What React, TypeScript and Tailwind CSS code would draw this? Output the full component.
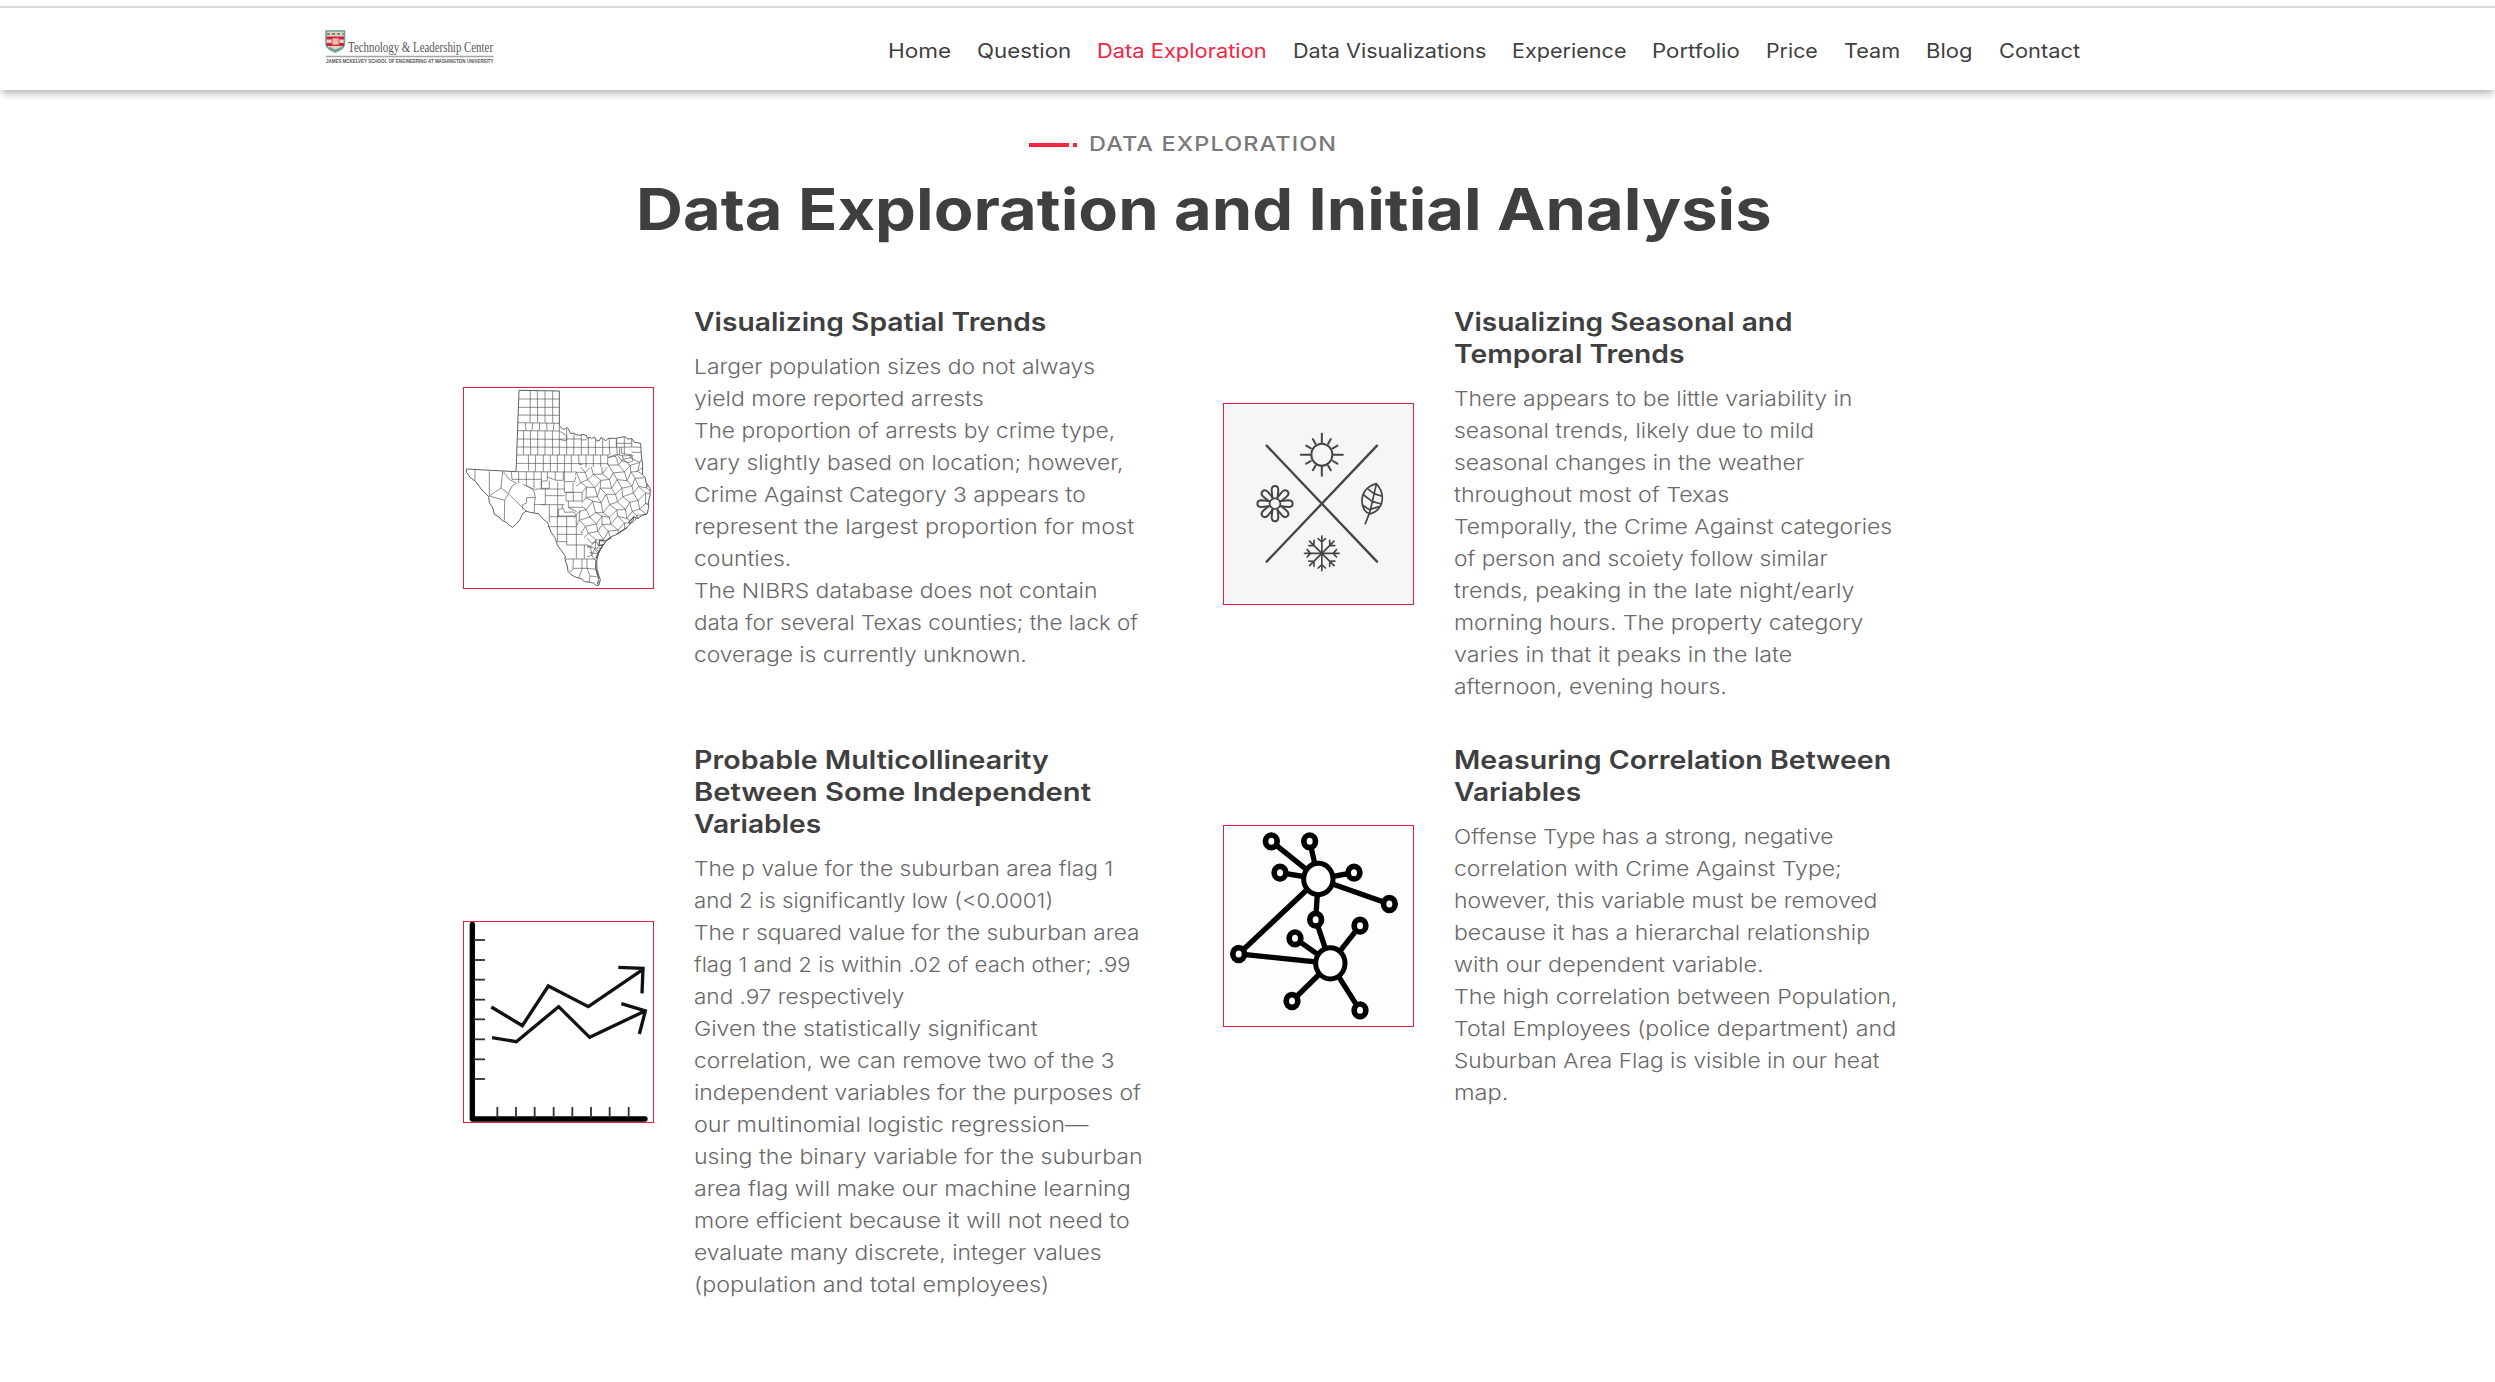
import { useLayoutEffect, useRef, useState } from "react";
import type { ReactNode } from "react";

type LineData = [text: string, width: number];

/** A single line of text whose glyphs are widened so that it spans `width`. */
function Fit({ text, width }: { text: string; width: number }) {
  const ref = useRef<HTMLSpanElement>(null);
  const [scale, setScale] = useState(1);
  useLayoutEffect(() => {
    if (ref.current) setScale(width / ref.current.offsetWidth);
  }, [text, width]);
  return (
    <span className="inline-block whitespace-nowrap" style={{ width }}>
      <span ref={ref} className="inline-block origin-left" style={{ transform: `scaleX(${scale})` }}>
        {text}
      </span>
    </span>
  );
}

function Logo() {
  return (
    <svg width="280" height="40" viewBox="0 0 280 40" aria-label="Technology & Leadership Center">
      <path d="M1 1H19.500V14Q19 19 10.200 22Q1.500 19 1 14Z" fill="#e9d3b8" stroke="#6fa192" strokeWidth="1.600" />
      <path d="M2 4H18.500" stroke="#6a9182" strokeWidth="2" strokeDasharray="3 2" />
      <path d="M1.500 8H19M1.500 14.500H19" stroke="#c4224c" strokeWidth="3" />
      <path d="M7 8H14V15H7Z" fill="#f0b9a5" stroke="#d4365a" strokeWidth=".8" />
      <path d="M4 17.500L10 20.500L17 17.500" stroke="#6fa192" strokeWidth="1.600" fill="none" />
      <text x="23" y="22.300" fontFamily="Liberation Serif, serif" fontSize="14.500" fill="#555" textLength="145" lengthAdjust="spacingAndGlyphs">
        Technology &amp; Leadership Center
      </text>
      <path d="M1 26.500H168.500" stroke="#a5a5a5" strokeWidth="1.300" />
      <text x="1" y="33" fontFamily="Liberation Sans, sans-serif" fontSize="5.400" fontWeight="700" fill="#555" textLength="167.500" lengthAdjust="spacingAndGlyphs">
        JAMES MCKELVEY SCHOOL OF ENGINEERING AT WASHINGTON UNIVERSITY
      </text>
    </svg>
  );
}

const noise = (i: number, j: number, k: number) => {
  const v = Math.sin(i * 127.1 + j * 311.7 + k * 74.7) * 43758.5453;
  return v - Math.floor(v) - 0.5;
};

/** Irregular brick-like cells standing for the small eastern counties. */
function easternCounties() {
  const size = 25;
  const angle = -0.5;
  const point = (i: number, j: number): [number, number] => {
    const x = i * size + (j % 2 ? size * 0.4 : 0) + noise(i, j, 1) * 11;
    const y = j * size + (i % 2 ? 6 : -5) + noise(i, j, 2) * 10;
    return [
      480 + x * Math.cos(angle) - y * Math.sin(angle),
      390 + x * Math.sin(angle) + y * Math.cos(angle),
    ];
  };
  let d = "";
  for (let i = -10; i < 11; i++) {
    for (let j = -10; j < 11; j++) {
      const a = point(i, j);
      const b = point(i + 1, j);
      const c = point(i, j + 1);
      d += `M${b[0].toFixed(1)} ${b[1].toFixed(1)}L${a[0].toFixed(1)} ${a[1].toFixed(1)}L${c[0].toFixed(1)} ${c[1].toFixed(1)}`;
    }
  }
  return d;
}

const TEXAS =
  "M207 46L328 48V152L336 161L344 163L350 158L354 160L362 176L370 174L378 179L390 181L396 178L409 181L412 190L420 187L425 191L433 186L440 197L447 198L453 188L460 191L467 198L474 190L496 190L508 188L524 185L534 192L546 191L553 202L572 205L574 240L578 272L577 298L585 307L588 322L596 334L601 342L600 360L596 378L596 395L592 416L578 421L562 431L552 425L548 440L539 448L530 459L516 468L499 479L484 485L472 493L466 503L458 510L454 520L446 533L443 545L440 562L441 583L446 600L451 615L447 630L440 632L430 624L416 621L404 620L393 611L378 607L362 598L354 589L352 573L346 558L345 542L332 524L322 510L316 490L304 473L297 456L293 443L278 431L266 416L252 414L240 412L228 408L216 419L211 432L200 446L188 457L178 451L171 443L157 437L147 426L133 418L128 398L118 382L116 365L96 345L77 320L60 307L50 293L49 282L198 290L200 240Z";

function TexasMap() {
  return (
    <svg width="191" height="202" viewBox="39 36 573 606" fill="none" stroke="#555" strokeLinejoin="round">
      <defs>
        <clipPath id="east">
          <path d="M372 290L388 282L395 270L410 280L430 275L474 276L474 246L498 240L574 240L578 272L577 298L601 342L596 395L592 416L539 448L499 479L466 503L443 545L440 555H411V510L398 480L379 450L372 425L395 395L397 352L368 325L378 305Z" />
        </clipPath>
      </defs>
      <path d={TEXAS} strokeWidth="2.800" />
      <g strokeWidth="2">
        <path d="M206 72H328M205 97H328M204 120L328 121M203 143L328 145M202 167L328 168L350 182V196M202 192L328 193L350 198M201 216L394 217M200 240L478 240M200 265L474 266M198 290L372 291" />
        <path d="M241 47L240 143M262 47L263 143M285 48V143M308 48V143M226 143L228 167M248 143L246 167M269 143L268 167M290 143L291 167M312 143L310 167" />
        <path d="M221 167L220 240M241 167L242 240M263 167V240M285 167V240M307 167L308 240M328 152V240M350 160V240M372 176L371 240M394 180V240M328 192H394" />
        <path d="M235 240L236 288M257 240L256 290M280 240V290M301 240V290M322 240V290M344 240L343 290M364 240V290M386 240L387 268L398 268M408 240V278M430 240V276M452 240V276M473 240V270" />
        <path d="M394 217H480M394 195L410 194M415 187V240M437 190L436 240M458 191V240M478 190V217L480 240M499 190V217M478 217H500V190M523 186V240M500 217L545 216V191M545 216L573 217M500 205H545M545 232H573M500 217L502 240M474 247L500 238L522 243L545 240M509 217V240M515 217V235L545 240L549 258L535 263L515 257L502 240" />
        <path d="M160 290L178 313L199 325L187 332L175 355L153 339L118 363M153 339L158 289M118 289V362M75 284V317M118 363L164 376L163 437M164 376L175 356L228 408M184 290L186 313H275M206 290V325M229 290V333L258 345M252 290V340M274 290V342M292 290V318H274V340H298V318M292 306L318 316H340V290M316 290V314M343 290V320H373L378 305" />
        <path d="M218 328L236 335L252 348L256 368L230 368V384L218 389V404M256 368L253 388M258 342H343M286 342V389M286 362H343M286 389L253 388M253 388V414M275 389H323V425M323 320V389H343M343 320V352H369V325M348 352V378H396V352M370 352V378M348 352H396M355 378V397H397M298 389V443M298 425H378M325 425L326 402L340 401L344 412L372 411L380 423H323M337 389V402M355 397L380 410" />
        <path d="M295 455H378M322 425V500H352M350 425V510H412M322 478H398M379 425V551M403 510V551M347 552H440M370 552L369 583L359 590M396 552V583L387 607M411 552V580L440 583M369 580H411M411 580L420 603L440 605M420 603L417 621M412 515L430 518L444 535M418 533L442 536M411 490L425 505L440 500L445 513L458 510" />
        <path clipPath="url(#east)" d={easternCounties()} />
      </g>
      <path d="M552 425L536 442L542 447M530 458L500 478M484 488L466 498L449 496L447 512L460 509M462 507L446 530L438 550M438 555L437 580L446 612M447 615L442 628" strokeWidth="3.500" />
    </svg>
  );
}

const TURNS = [0, 45, 90, 135, 180, 225, 270, 315];
const RAYS = [0, 30, 60, 90, 120, 150, 180, 210, 240, 270, 300, 330];

function Seasons() {
  return (
    <svg width="191" height="202" viewBox="39 24 573 606" fill="none" stroke="#454545" strokeWidth="6" strokeLinecap="round" strokeLinejoin="round">
      <rect x="39" y="24" width="573" height="606" fill="#f5f6f8" stroke="none" />
      <path d="M170 152L501 500M501 152L170 500" strokeWidth="7" />
      <g transform="translate(335.500 179)">
        <ellipse rx="31.500" ry="33" />
        {RAYS.map((a) => (
          <path key={a} d={a % 90 === 0 ? "M0 -35V-63" : "M0 -38V-54"} transform={`rotate(${a})`} />
        ))}
      </g>
      <g transform="translate(195 326)">
        <circle r="16" strokeWidth="5" />
        {TURNS.map((a) => (
          <path key={a} d="M-8 -18L-10 -40C-10 -57 10 -57 10 -40L8 -18" transform={`rotate(${a})`} />
        ))}
      </g>
      <g transform="translate(335.500 475)" strokeWidth="5">
        {TURNS.map((a) => (
          <path key={a} d="M0 0V-52M-11 -44L0 -34L11 -44" transform={`rotate(${a})`} />
        ))}
      </g>
      <path d="M466 386L480 350L499 268M499 266C468 275 454 297 456 321C457 340 467 354 480 357C502 351 517 333 517 308C517 289 508 276 499 266M476 284L492 296M461 300L486 319M457 330L478 344M492 296L514 303M486 319L514 327M478 344L508 335" strokeWidth="5" />
    </svg>
  );
}

const Y_TICKS = [102, 162, 221, 281, 340, 400, 460, 519];
const X_TICKS = [142, 198, 254, 311, 367, 423, 479, 536];

function TrendChart() {
  return (
    <svg width="191" height="202" viewBox="39 45 573 606" fill="none" stroke="#000">
      <path d="M67 55V639H585" strokeWidth="16" strokeLinecap="round" strokeLinejoin="round" />
      <g stroke="#333" strokeWidth="5.500">
        {Y_TICKS.map((y) => (
          <path key={y} d={`M72 ${y}H105`} />
        ))}
        {X_TICKS.map((x) => (
          <path key={x} d={`M${x} 603V635`} />
        ))}
      </g>
      <g stroke="#111" strokeWidth="10">
        <path d="M124 303L217 359L295 240L415 302L579 190M505 184L579 187L576 262" />
        <path d="M126 395L199 407L326 302L419 394L585 315M514 293L586 315L568 384" />
      </g>
    </svg>
  );
}

const SMALL_NODES = [
  [184, 76], [299, 76], [210, 170], [432, 170], [538, 264], [317, 311],
  [450, 329], [255, 367], [86, 414], [246, 555], [450, 583],
];

function Network() {
  return (
    <svg width="191" height="202" viewBox="39 27 573 606" fill="none" stroke="#000">
      <rect x="39" y="27" width="573" height="606" fill="#fdfdfd" stroke="none" />
      <path
        d="M184 76L325 189M299 76L325 189M210 170L325 189L432 170M325 189L538 264M325 189L317 311L361 442M325 189L86 414L361 442L450 329M255 367L361 442L246 555M361 442L450 583"
        strokeWidth="16"
      />
      <g fill="#fff">
        <ellipse cx="325" cy="189" rx="44" ry="47" strokeWidth="15" />
        <ellipse cx="361" cy="442" rx="44" ry="47" strokeWidth="15" />
        {SMALL_NODES.map(([x, y]) => (
          <ellipse key={`${x}-${y}`} cx={x} cy={y} rx="17.500" ry="19" strokeWidth="17" />
        ))}
      </g>
    </svg>
  );
}

const NAV: LineData[] = [
  ["Home", 63], ["Question", 94], ["Data Exploration", 170], ["Data Visualizations", 193], ["Experience", 114],
  ["Portfolio", 88], ["Price", 52], ["Team", 56], ["Blog", 47], ["Contact", 81],
];

interface Finding {
  art: ReactNode;
  heading: LineData[];
  body: LineData[];
}

const FINDINGS: Finding[] = [
  {
    art: <TexasMap />,
    heading: [["Visualizing Spatial Trends", 352]],
    body: [
      ["Larger population sizes do not always", 401],
      ["yield more reported arrests", 290],
      ["The proportion of arrests by crime type,", 421],
      ["vary slightly based on location; however,", 429],
      ["Crime Against Category 3 appears to", 392],
      ["represent the largest proportion for most", 440],
      ["counties.", 97],
      ["The NIBRS database does not contain", 403],
      ["data for several Texas counties; the lack of", 444],
      ["coverage is currently unknown.", 333],
    ],
  },
  {
    art: <Seasons />,
    heading: [["Visualizing Seasonal and", 339], ["Temporal Trends", 231]],
    body: [
      ["There appears to be little variability in", 398],
      ["seasonal trends, likely due to mild", 360],
      ["seasonal changes in the weather", 350],
      ["throughout most of Texas", 275],
      ["Temporally, the Crime Against categories", 438],
      ["of person and scoiety follow similar", 374],
      ["trends, peaking in the late night/early", 400],
      ["morning hours. The property category", 409],
      ["varies in that it peaks in the late", 338],
      ["afternoon, evening hours.", 273],
    ],
  },
  {
    art: <TrendChart />,
    heading: [["Probable Multicollinearity", 355], ["Between Some Independent", 397], ["Variables", 127]],
    body: [
      ["The p value for the suburban area flag 1", 419],
      ["and 2 is significantly low (<0.0001)", 359],
      ["The r squared value for the suburban area", 446],
      ["flag 1 and 2 is within .02 of each other; .99", 437],
      ["and .97 respectively", 210],
      ["Given the statistically significant", 344],
      ["correlation, we can remove two of the 3", 420],
      ["independent variables for the purposes of", 447],
      ["our multinomial logistic regression—", 394],
      ["using the binary variable for the suburban", 449],
      ["area flag will make our machine learning", 437],
      ["more efficient because it will not need to", 436],
      ["evaluate many discrete, integer values", 408],
      ["(population and total employees)", 355],
    ],
  },
  {
    art: <Network />,
    heading: [["Measuring Correlation Between", 437], ["Variables", 127]],
    body: [
      ["Offense Type has a strong, negative", 379],
      ["correlation with Crime Against Type;", 388],
      ["however, this variable must be removed", 423],
      ["because it has a hierarchal relationship", 416],
      ["with our dependent variable.", 310],
      ["The high correlation between Population,", 444],
      ["Total Employees (police department) and", 442],
      ["Suburban Area Flag is visible in our heat", 426],
      ["map.", 55],
    ],
  },
];

function Card({ art, heading, body }: Finding) {
  return (
    <article className="flex items-center gap-[40px]">
      <div className="relative h-[202px] w-[191px] shrink-0">
        {art}
        <div className="pointer-events-none absolute inset-0 border border-[#e8203c]" />
      </div>
      <div>
        <h3 className="text-[25.500px] leading-8 font-semibold text-[#3f3f3f]">
          {heading.map(([text, width]) => (
            <div key={text} className="h-8"><Fit text={text} width={width} /></div>
          ))}
        </h3>
        <div className="mt-[13.500px] text-[20.600px] leading-8 font-light text-[#686868]">
          {body.map(([text, width]) => (
            <div key={text} className="h-8"><Fit text={text} width={width} /></div>
          ))}
        </div>
      </div>
    </article>
  );
}

export default function App() {
  return (
    <div className="h-[1382px] w-[2495px] overflow-hidden bg-white pt-[6px] font-['Inter',sans-serif]">
      <header className="flex h-[84px] items-start border-t-2 border-[#dadada] bg-white pl-[325px] shadow-[0_5px_8px_-2px_rgba(0,0,0,0.32)]">
        <div className="mt-[22px] w-[562.500px]">
          <Logo />
        </div>
        <nav className="mt-[26.500px] flex gap-[26.100px] text-[19.700px] leading-8 text-[#3f3f3f]">
          {NAV.map(([text, width]) => (
            <a key={text} className={text === "Data Exploration" ? "text-[#f6243f]" : ""}>
              <Fit text={text} width={width} />
            </a>
          ))}
        </nav>
      </header>
      <main>
        <div className="mt-[37.500px] flex items-center pl-[1029px]">
          <span className="mt-[3px] h-1 w-10 bg-[#f6243f]" />
          <span className="mt-[3px] ml-1 h-1 w-1 bg-[#f6243f]" />
          <h2 className="ml-[12px] text-[20.600px] leading-8 font-medium tracking-[1px] text-[#7a7a7a]">
            <Fit text="DATA EXPLORATION" width={248} />
          </h2>
        </div>
        <h1 className="mt-[13px] pl-[636px] text-[57.500px] leading-[72px] font-bold text-[#3f3f3f]">
          <Fit text="Data Exploration and Initial Analysis" width={1136} />
        </h1>
        <section className="mt-[61px] grid grid-cols-[760px_760px] items-start gap-y-[40.500px] pl-[463px]">
          {FINDINGS.map((finding) => (
            <Card key={finding.heading[0][0]} {...finding} />
          ))}
        </section>
      </main>
    </div>
  );
}
